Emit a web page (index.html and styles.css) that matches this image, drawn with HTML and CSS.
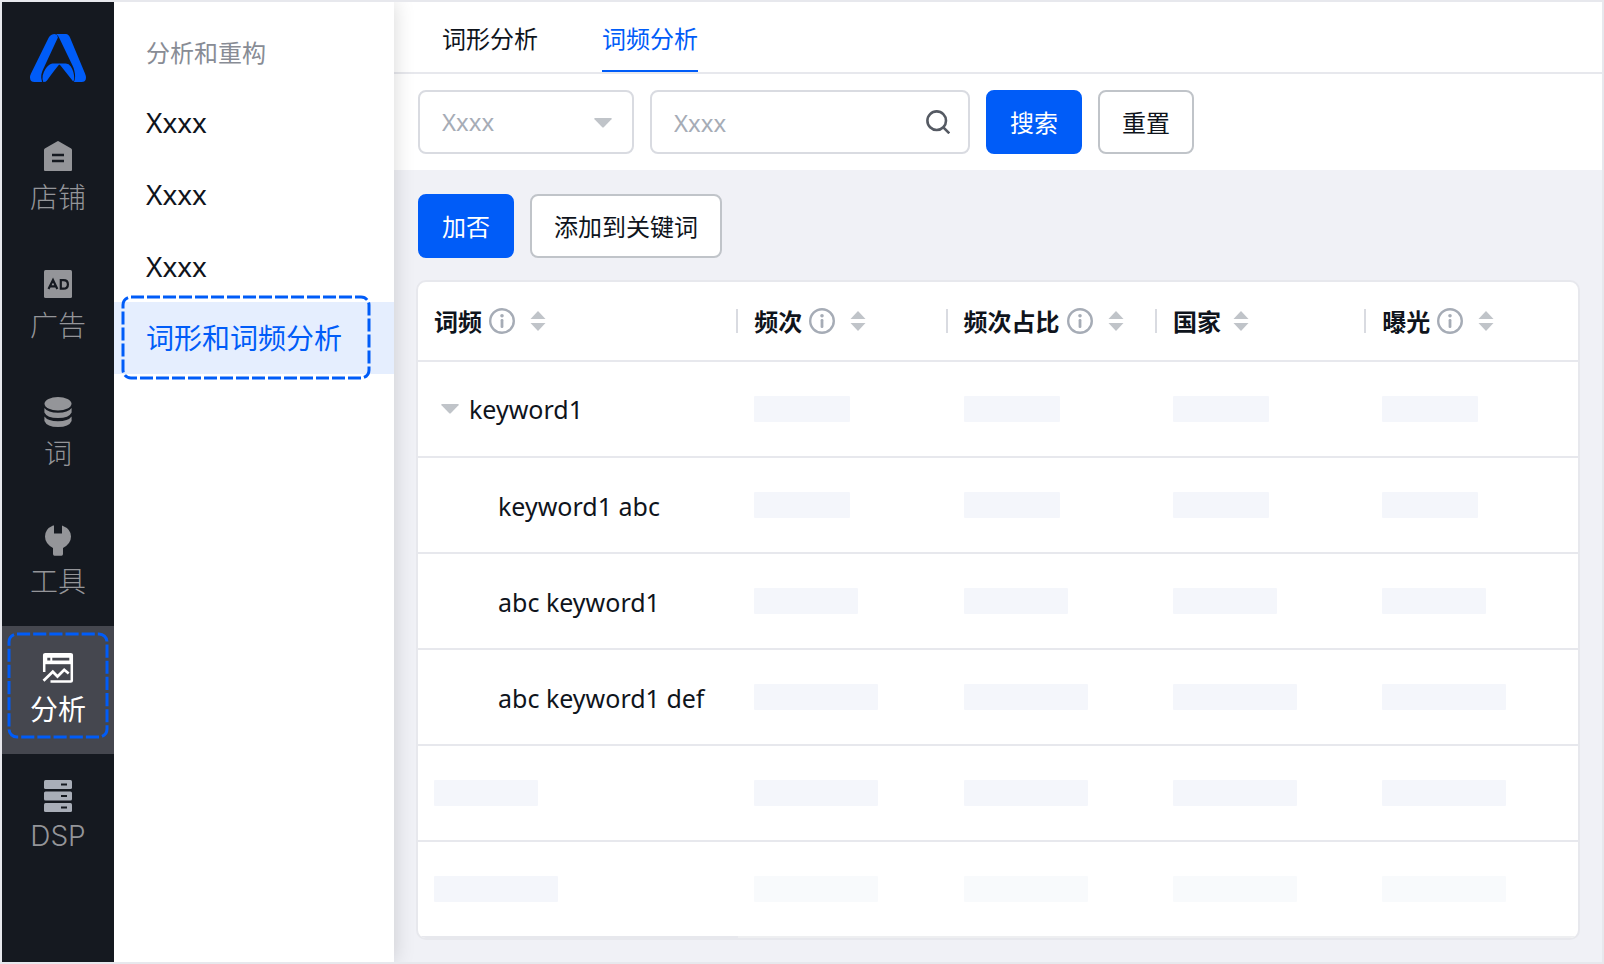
FILE: index.html
```html
<!DOCTYPE html>
<html lang="zh-CN">
<head>
<meta charset="utf-8">
<meta name="viewport" content="width=device-width, initial-scale=1">
<title>词频分析</title>
<link rel="stylesheet" href="styles.css">
</head>
<body>
<svg class="sprite" aria-hidden="true">
  <symbol id="info" viewBox="0 0 26 26">
    <circle cx="13" cy="13" r="11.8" fill="none" stroke="currentColor" stroke-width="2.4"/>
    <circle cx="13" cy="7.8" r="1.8" fill="currentColor"/>
    <rect x="11.6" y="11" width="2.8" height="9" rx="1.2" fill="currentColor"/>
  </symbol>
  <symbol id="sort" viewBox="0 0 16 20">
    <path d="M8 0 15.5 8H.5zM8 20 .5 12h15z" fill="currentColor"/>
  </symbol>
  <symbol id="caret" viewBox="0 0 18 10">
    <path d="M1 0H17Q18.400 0 17.500 1.200L10 9Q9 10 8 9L.5 1.200Q-.4 0 1 0z" fill="currentColor"/>
  </symbol>
</svg>
<div class="app">
  <nav class="rail" aria-label="主导航">
    <a class="logo" href="#" aria-label="首页">
      <svg viewBox="0 0 56 48" width="56" height="48" fill="#005cf8">
        <path d="M18.500 4Q20.500 0 25 0q2.700.6 2.900 3.500L13.500 34.500Q10.800 40 11.300 44l.7 4H4.500Q0 48 0 43.500 0 41.500 1 39.500z"/>
        <path d="M26 0h10q2.500 0 4 3.500L55 39.500q1 2.500 1 4Q56 48 51.500 48H44q2-5 .3-11.500Q43.800 34 42.500 31.500L29.500 4.500Q28.500 1.500 26 0z"/>
        <path d="M22.500 29.500H30Q24.500 36 17 46.500 16 48 13.300 48q-1.300-3-.6-6.500Q14.500 34.500 19 31q1.800-1.500 3.500-1.500z"/>
        <path d="M29.800 29.500h6q3.200 0 5 3 3.300 5 3.400 11.500 0 2.500-1 3.500L30.500 31.500q-.8-.8-1.700-1z"/>
      </svg>
    </a>
    <a class="rail-item" href="#">
      <svg class="rail-icon" viewBox="0 0 32 32"><path d="M15 1.400q1-.6 2 0L29.200 8.500q.8.500.8 1.500v20q0 1-1 1H3q-1 0-1-1V10q0-1 .8-1.500z" fill="currentColor"/><path d="M10 15h12M10 21h12" stroke="#151920" stroke-width="2.400"/></svg>
      <span>店铺</span>
    </a>
    <a class="rail-item" href="#">
      <svg class="rail-icon" viewBox="0 0 32 32"><rect x="2" y="2" width="28" height="28" rx="1.500" fill="currentColor"/><path d="M6.500 21 11 12l4.300 9M8 18.300h6M18.800 12.200h2.700q4.400 0 4.400 4.200t-4.400 4.200h-2.700z" fill="none" stroke="#151920" stroke-width="2.200"/></svg>
      <span>广告</span>
    </a>
    <a class="rail-item" href="#">
      <svg class="rail-icon" viewBox="0 0 32 32" fill="currentColor"><ellipse cx="16" cy="7.700" rx="13.500" ry="6.700"/><path d="M2.400 12q3.500 4.800 13.600 4.800T29.600 12v4.500q-2.500 5.500-13.600 5.500T2.400 16.500zM2.400 20.500q3.500 4.800 13.600 4.800t13.600-4.800V25Q27.100 31 16 31T2.400 25z"/></svg>
      <span>词</span>
    </a>
    <a class="rail-item" href="#">
      <svg class="rail-icon" viewBox="0 0 32 32"><path d="M12 1.500V9.500h8V1.500q9 3.500 9 11 0 7-8 11.500V30q0 1.700-1.500 1.700h-7Q11 31.700 11 30V24Q3 19.500 3 12.500 3 5 11 1.500z" fill="currentColor"/></svg>
      <span>工具</span>
    </a>
    <a class="rail-item is-active" href="#" aria-current="page">
      <svg class="rail-icon" viewBox="0 0 32 32" fill="none" stroke="currentColor"><path d="M2.200 20V3.200q0-1 1-1h25.600q1 0 1 1v25.600q0 .8-1 .8H8.500" stroke-width="2.500"/><path d="M1.500 2h29v10.200h-29z" fill="currentColor" stroke="none"/><path d="M5.300 7.200h3M10.300 7.200h17" stroke="#45474f" stroke-width="2.800"/><path d="m1.500 28.700 9.300-9 4.700 4.800 6.700-6.700 4.500 3.700" stroke-width="2.700"/></svg>
      <span>分析</span>
      <svg class="dashed dashed-rail" aria-hidden="true"><rect rx="8" pathLength="384"/></svg>
    </a>
    <a class="rail-item rail-item-latin" href="#">
      <svg class="rail-icon rail-icon-cool" viewBox="0 0 32 32"><g fill="currentColor"><rect x="2" width="28" height="9" rx="1.500"/><rect x="2" y="11.500" width="28" height="9" rx="1.500"/><rect x="2" y="23" width="28" height="9" rx="1.500"/></g><path d="M19 4.500h6M19 16h6M19 27.500h6" stroke="#151920" stroke-width="2"/></svg>
      <span>DSP</span>
    </a>
  </nav>

  <nav class="submenu" aria-label="分析和重构">
    <h2 class="submenu-title">分析和重构</h2>
    <a class="submenu-item" href="#">Xxxx</a>
    <a class="submenu-item" href="#">Xxxx</a>
    <a class="submenu-item" href="#">Xxxx</a>
    <a class="submenu-item is-active" href="#" aria-current="page">词形和词频分析
      <svg class="dashed dashed-submenu" aria-hidden="true"><rect rx="8" pathLength="640"/></svg>
    </a>
  </nav>

  <main class="main">
    <nav class="tabs" aria-label="分析类型">
      <a class="tab" href="#">词形分析</a>
      <a class="tab is-active" href="#" aria-current="page">词频分析</a>
    </nav>
    <form class="filters">
      <div class="field field-select">
        <select class="control" aria-label="筛选条件"><option>Xxxx</option></select>
        <svg class="field-caret" aria-hidden="true"><use href="#caret"/></svg>
      </div>
      <div class="field field-search">
        <input class="control" type="text" placeholder="Xxxx" aria-label="搜索内容">
        <svg class="field-search-icon" viewBox="0 0 24 24" fill="none" stroke="#555a63" stroke-width="2.600" aria-hidden="true"><circle cx="10.700" cy="10.700" r="9.300"/><path d="m17.300 17.300 6 6"/></svg>
      </div>
      <button class="btn btn-primary" type="button">搜索</button>
      <button class="btn" type="reset">重置</button>
    </form>
    <section class="content">
      <div class="actions">
        <button class="btn btn-primary" type="button">加否</button>
        <button class="btn" type="button">添加到关键词</button>
      </div>
      <div class="card">
        <table class="grid">
          <colgroup><col class="col-word"><col class="col-stat"><col class="col-stat"><col class="col-stat"><col></colgroup>
          <thead>
            <tr>
              <th scope="col"><div class="head">词频<svg class="info"><use href="#info"/></svg><button class="sort" type="button" aria-label="按词频排序"><svg><use href="#sort"/></svg></button></div></th>
              <th scope="col"><div class="head">频次<svg class="info"><use href="#info"/></svg><button class="sort" type="button" aria-label="按频次排序"><svg><use href="#sort"/></svg></button></div></th>
              <th scope="col"><div class="head">频次占比<svg class="info"><use href="#info"/></svg><button class="sort" type="button" aria-label="按频次占比排序"><svg><use href="#sort"/></svg></button></div></th>
              <th scope="col"><div class="head">国家<button class="sort sort-near" type="button" aria-label="按国家排序"><svg><use href="#sort"/></svg></button></div></th>
              <th scope="col"><div class="head">曝光<svg class="info"><use href="#info"/></svg><button class="sort" type="button" aria-label="按曝光排序"><svg><use href="#sort"/></svg></button></div></th>
            </tr>
          </thead>
          <tbody>
            <tr class="size-s"><td><div class="parent"><button class="toggle" type="button" aria-label="收起" aria-expanded="true"><svg><use href="#caret"/></svg></button>keyword1</div></td><td><div class="bar"></div></td><td><div class="bar"></div></td><td><div class="bar"></div></td><td><div class="bar"></div></td></tr>
            <tr class="size-s"><td class="child">keyword1 abc</td><td><div class="bar"></div></td><td><div class="bar"></div></td><td><div class="bar"></div></td><td><div class="bar"></div></td></tr>
            <tr class="size-m"><td class="child">abc keyword1</td><td><div class="bar"></div></td><td><div class="bar"></div></td><td><div class="bar"></div></td><td><div class="bar"></div></td></tr>
            <tr class="size-l"><td class="child">abc keyword1 def</td><td><div class="bar"></div></td><td><div class="bar"></div></td><td><div class="bar"></div></td><td><div class="bar"></div></td></tr>
            <tr class="size-l"><td><div class="bar bar-m"></div></td><td><div class="bar"></div></td><td><div class="bar"></div></td><td><div class="bar"></div></td><td><div class="bar"></div></td></tr>
            <tr class="size-l is-faded"><td><div class="bar"></div></td><td><div class="bar"></div></td><td><div class="bar"></div></td><td><div class="bar"></div></td><td><div class="bar"></div></td></tr>
          </tbody>
        </table>
      </div>
    </section>
  </main>
</div>
</body>
</html>
```

FILE: styles.css
```css
:root {
  --blue: #005cf8;
  --ink: #0f141c;
  --rail: #151920;
  --line: #e7e8ed;
  --field-line: #d9dbe1;
  --muted: #a6acb6;
  --mark: #c0c4c9;
  --latin: "Noto Sans", "Noto Sans CJK SC", sans-serif;
}

* { box-sizing: border-box; }

body {
  margin: 0;
  color: var(--ink);
  font: 24px/32px "Noto Sans CJK SC", sans-serif;
}

a { color: inherit; text-decoration: none; }

button, input, select { font: inherit; color: inherit; }

.sprite { position: absolute; width: 0; height: 0; }

.app {
  display: grid;
  grid-template-columns: 112px 280px minmax(0, 1fr);
  min-height: 100vh;
  border: 2px solid var(--line);
  overflow: hidden;
}

/* Icon rail */
.rail {
  position: relative;
  z-index: 2;
  display: flex;
  flex-direction: column;
  background: var(--rail);
  color: #949599;
}

.logo {
  height: 112px;
  padding-top: 32px;
  text-align: center;
  line-height: 0;
}

.rail-item {
  position: relative;
  display: flex;
  flex-direction: column;
  align-items: center;
  gap: 4px;
  height: 128px;
  padding-top: 26px;
  font-size: 28px;
  font-weight: 300;
  line-height: 40px;
}

.rail-item-latin { font-family: Inter, sans-serif; }
.rail-icon { width: 32px; height: 32px; }
.rail-icon-cool { color: #a9aeb8; }
.rail-item.is-active { background: #45474f; color: #fff; font-weight: 400; }

.dashed { position: absolute; overflow: visible; pointer-events: none; }

.dashed rect {
  width: 100%;
  height: 100%;
  fill: none;
  stroke: var(--blue);
  stroke-width: 3px;
  stroke-dasharray: 13 3;
}

.dashed-rail { top: 8px; left: 7px; width: 98px; height: 103px; }

/* Secondary menu */
.submenu {
  position: relative;
  z-index: 1;
  background: #fff;
  box-shadow: 0 0 20px rgba(0, 0, 0, .16);
}

.submenu-title {
  margin: 0;
  padding: 34px 32px 18px;
  color: #888c95;
  font-size: 24px;
  font-weight: 400;
}

.submenu-item {
  position: relative;
  display: block;
  height: 72px;
  padding: 0 32px;
  font-family: var(--latin);
  font-size: 28px;
  line-height: 72px;
}

.submenu-item.is-active { background: #e5eefe; color: var(--blue); }
.dashed-submenu { top: -5px; left: 9px; width: 246px; height: 81px; }

/* Main column */
.main {
  display: flex;
  flex-direction: column;
  background: #f0f1f6;
}

.tabs {
  display: flex;
  gap: 64px;
  padding: 0 48px;
  border-bottom: 2px solid var(--line);
  background: #fff;
}

.tab {
  padding: 20px 0 16px;
  border-bottom: 2px solid transparent;
}

.tab.is-active { border-color: var(--blue); color: var(--blue); }

.filters {
  display: flex;
  gap: 16px;
  padding: 16px 24px;
  background: #fff;
}

.field { position: relative; height: 64px; }
.field-select { width: 216px; }
.field-search { width: 320px; }

.control {
  display: block;
  width: 100%;
  height: 64px;
  padding: 0 22px;
  border: 2px solid var(--field-line);
  border-radius: 8px;
  background: #fff;
  color: var(--muted);
  font-family: var(--latin);
  appearance: none;
}

.control::placeholder { color: var(--muted); opacity: 1; }

.field-caret {
  position: absolute;
  top: 28px;
  right: 22px;
  width: 18px;
  height: 10px;
  color: var(--mark);
  pointer-events: none;
}

.field-search-icon {
  position: absolute;
  top: 20px;
  right: 20px;
  width: 24px;
  height: 24px;
}

.btn {
  height: 64px;
  padding: 0 22px;
  border: 2px solid var(--mark);
  border-radius: 8px;
  background: #fff;
}

.btn-primary { border-color: var(--blue); background: var(--blue); color: #fff; }

.content { padding: 24px 22px 22px; }
.actions { display: flex; gap: 16px; padding: 0 2px 22px; }

/* Results table */
.card {
  border: 2px solid var(--line);
  border-radius: 10px;
  background: #fff;
  overflow: hidden;
}

.grid {
  width: 100%;
  border-spacing: 0;
  table-layout: fixed;
}

.col-word { width: 27.6%; }
.col-stat { width: 18.05%; }

.grid th, .grid td {
  padding: 0 16px;
  border-bottom: 2px solid var(--line);
  text-align: left;
  white-space: nowrap;
}

.grid th {
  height: 80px;
  background: linear-gradient(var(--field-line), var(--field-line)) right center / 2px 24px no-repeat;
}

.grid th:last-child { background: none; }
.grid td { height: 96px; }

.head { display: flex; align-items: center; font-weight: 700; }

.info {
  flex: none;
  width: 26px;
  height: 26px;
  margin-left: 7px;
  color: var(--muted);
}

.sort, .toggle {
  flex: none;
  padding: 0;
  border: 0;
  background: none;
  color: var(--mark);
  line-height: 0;
}

.sort { margin-left: 15px; }
.sort-near { margin-left: 12px; }
.sort svg { width: 16px; height: 20px; }
.toggle svg { width: 18px; height: 10px; }

.parent, .child { font-family: var(--latin); font-size: 25px; line-height: 32px; }
.parent { display: flex; align-items: center; gap: 10px; padding-left: 7px; }
.grid .child { padding: 2px 0 0 80px; }

.bar { width: 124px; height: 26px; border-radius: 1px; background: #f4f6fb; }
.size-s .bar { width: 96px; }
.size-m .bar, .size-l .bar-m { width: 104px; }
.is-faded td + td { border-color: #eeeff1; }
.is-faded td + td .bar { background: #f8fafc; }
```
